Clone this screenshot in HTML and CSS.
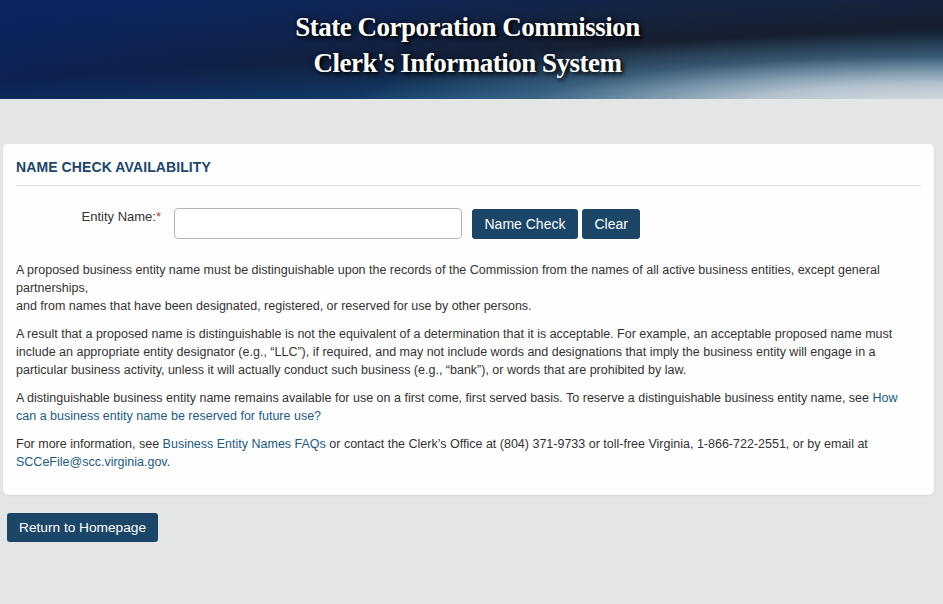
FILE: index.html
```html
<!DOCTYPE html>
<html lang="en">
<head>
<meta charset="utf-8">
<title>Name Check Availability</title>
<link rel="stylesheet" href="styles.css">
</head>
<body>
<header class="banner">
  <div class="banner-title">State Corporation Commission</div>
  <div class="banner-title">Clerk's Information System</div>
</header>
<main class="page">
  <section class="card">
    <h2 class="card-heading">NAME CHECK AVAILABILITY</h2>
    <div class="form-row">
      <label class="field-label" for="entity">Entity Name:<span class="req">*</span></label>
      <input class="field-input" id="entity" type="text">
      <div class="actions">
        <button class="btn" type="button">Name Check</button>
        <button class="btn" type="button">Clear</button>
      </div>
    </div>
    <p class="info">A proposed business entity name must be distinguishable upon the records of the Commission from the names of all active business entities, except general partnerships,<br>and from names that have been designated, registered, or reserved for use by other persons.</p>
    <p class="info">A result that a proposed name is distinguishable is not the equivalent of a determination that it is acceptable. For example, an acceptable proposed name must include an appropriate entity designator (e.g., “LLC”), if required, and may not include words and designations that imply the business entity will engage in a particular business activity, unless it will actually conduct such business (e.g., “bank”), or words that are prohibited by law.</p>
    <p class="info">A distinguishable business entity name remains available for use on a first come, first served basis. To reserve a distinguishable business entity name, see <a class="link" href="#">How can a business entity name be reserved for future use?</a></p>
    <p class="info">For more information, see <a class="link" href="#">Business Entity Names FAQs</a> or contact the Clerk’s Office at (804) 371-9733 or toll-free Virginia, 1-866-722-2551, or by email at <a class="link" href="#">SCCeFile@scc.virginia.gov</a>.</p>
  </section>
  <div class="footer-actions">
    <button class="btn btn-home" type="button">Return to Homepage</button>
  </div>
</main>
</body>
</html>
```
FILE: styles.css
```css
* { box-sizing: border-box; }
html, body { margin: 0; padding: 0; }
body {
  background: #e4e5e5;
  font-family: "Liberation Sans", Arial, sans-serif;
  color: #333;
  width: 943px;
  height: 604px;
  overflow: hidden;
}
.banner {
  height: 99px;
  padding-top: 9px;
  text-align: center;
  background:
    radial-gradient(ellipse 600px 78px at 100% 112%, rgba(228,231,234,1) 0%, rgba(205,213,221,0.85) 35%, rgba(120,150,175,0.35) 70%, rgba(60,100,130,0) 100%),
    linear-gradient(90deg, rgba(8,36,106,0.6) 0%, rgba(8,36,106,0.3) 35%, rgba(8,36,106,0) 65%),
    linear-gradient(176.8deg, #0e2758 0%, #142443 28%, #161f2f 52%, #15344f 68%, #164a6e 82%, #1b5577 100%);
}
.banner-title {
  font-family: "Liberation Serif", "Times New Roman", serif;
  font-weight: bold;
  font-size: 27px;
  line-height: 36px;
  color: #fff;
  text-shadow: 2px 2px 4px #000, 0 0 6px rgba(0,0,0,0.6);
  letter-spacing: -0.5px;
  padding-right: 8px;
}
.page {
  padding: 45px 9px 0 3px;
}
.card {
  background: #fefefe;
  border-radius: 5px;
  box-shadow: 0 1px 2px rgba(0,0,0,0.08);
  padding: 14px 13px 14px 13px;
  height: 351px;
}
.card-heading {
  margin: 0;
  font-size: 14px;
  font-weight: bold;
  color: #1b4668;
  letter-spacing: 0.1px;
  padding-top: 1px;
  padding-bottom: 9px;
  border-bottom: 1px solid #dedede;
  line-height: 17px;
}
.form-row {
  display: flex;
  align-items: center;
  margin-top: 22px;
  margin-bottom: 22px;
}
.field-label {
  width: 158px;
  text-align: right;
  font-size: 13px;
  color: #333;
  padding-right: 13px;
  align-self: flex-start;
  padding-top: 1px;
}
.req { color: #c0392b; }
.field-input {
  width: 288px;
  height: 31px;
  border: 1px solid #b3b3b3;
  border-radius: 4px;
  background: #fff;
  margin: 0 10px 0 0;
}
.actions { display: flex; gap: 4px; }
.btn {
  background: #1b4668;
  color: #fff;
  border: 0;
  border-radius: 3px;
  font-family: "Liberation Sans", Arial, sans-serif;
  font-size: 14px;
  height: 30px;
  padding: 0 12.5px;
  cursor: pointer;
}
.info {
  margin: 0 0 10px 0;
  font-size: 12.5px;
  line-height: 18px;
  color: #333;
}
.link { color: #1b5b86; text-decoration: none; }
.footer-actions { padding: 18px 0 0 4px; }
.btn-home { height: 29px; padding: 0 12px; font-size: 13.7px; }
```
